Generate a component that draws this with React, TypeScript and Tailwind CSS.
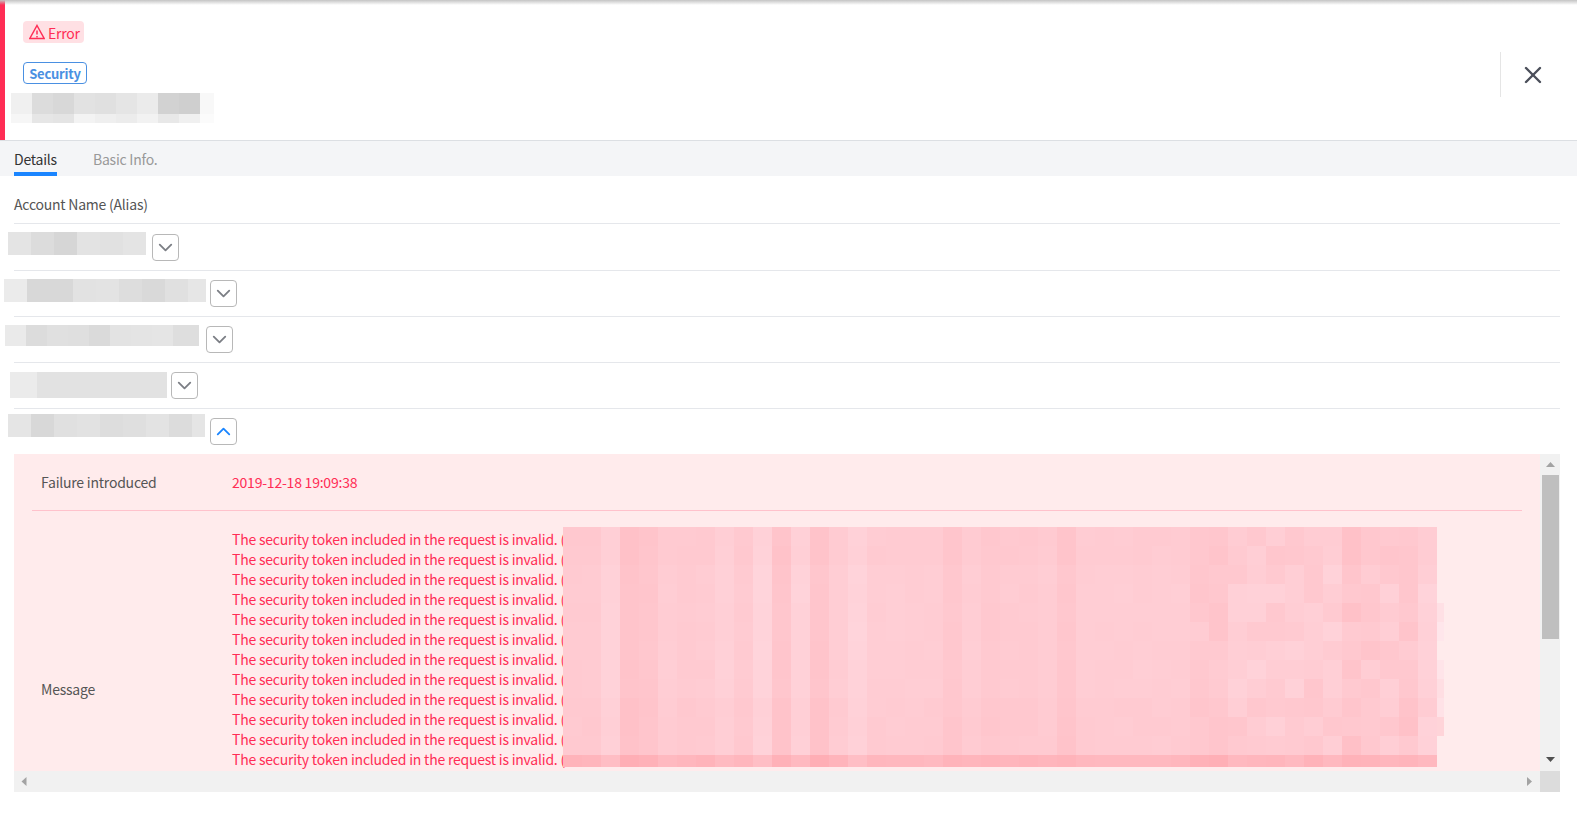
import React from "react";
import { X, ChevronDown, ChevronUp } from "lucide-react";

const gray = (v: number) => `rgb(${v},${v},${v})`;

// redacted account names
const rows = [
  { block: "-ml-[6px] mt-[8px]", cell: "w-[23px] h-[23px]", shades: [228, 220, 214, 227, 225, 228], btn: "ml-[6px] mt-[10px]" },
  { block: "-ml-[10px] mt-[8px]", cell: "w-[23px] h-[23px]", shades: [235, 216, 216, 226, 227, 221, 217, 224, 230], btn: "ml-[4px] mt-[9px]", last: "w-[18px] h-[23px]" },
  { block: "-ml-[9px] mt-[8px]", cell: "w-[21px] h-[21px]", shades: [234, 220, 224, 223, 218, 227, 228, 229, 222], btn: "ml-[7px] mt-[9px]", last: "w-[26px] h-[21px]" },
  { block: "-ml-[4px] mt-[9px]", cell: "w-[27px] h-[26px]", shades: [235, 226, 226, 226, 226, 226], btn: "ml-[4px] mt-[9px]", last: "w-[22px] h-[26px]" },
  { block: "-ml-[6px] mt-[5px]", cell: "w-[23px] h-[23px]", shades: [229, 216, 224, 226, 221, 223, 227, 220, 229], btn: "ml-[5px] mt-[9px]", last: "w-[13px] h-[23px]", open: true },
];

const titleTop = [240, 220, 216, 226, 224, 229, 235, 210, 207, 248];
const titleBottom = [246, 230, 228, 243, 239, 236, 242, 232, 240, 251];

const columns = [
  198, 198, 208, 188, 192, 201, 198, 199, 206, 198, 210, 190, 208, 190, 201, 210, 201, 201, 201, 201, 194, 201, 196,
  198, 198, 201, 192, 201, 201, 201, 201, 201, 201, 194, 192, 201, 201, 201, 201, 198, 201, 191, 195, 199, 194, 206,
];
const edge: Record<number, number> = { 4: 224, 5: 230, 7: 228, 8: 222, 9: 226, 10: 212 };

const noise = (r: number, c: number) => {
  const n = Math.sin(r * 12.9898 + c * 78.233) * 43758.5453;
  return n - Math.floor(n) - 0.5;
};

const shade = (r: number, c: number) => {
  const base = 202 + (columns[c] - 200) * 0.7;
  if (r === 12) return Math.round(base - 20 + noise(r, c) * 5);
  const spread = c >= 33 ? 10 : 2;
  const lift = r >= 2 && r <= 8 ? 2 : 0;
  return Math.round(base + lift + noise(r, c) * spread);
};

const Mosaic = () => (
  <div className="absolute left-[331px] top-[-2px] flex">
    <div className="grid grid-cols-[repeat(46,19px)] grid-rows-[repeat(12,19px)_12px]">
      {Array.from({ length: 13 * 46 }, (_, i) => {
        const g = shade(Math.floor(i / 46), i % 46);
        return <div key={i} style={{ backgroundColor: `rgb(255,${g},${g + 7})` }} />;
      })}
    </div>
    <div className="grid w-[7px] grid-rows-[repeat(12,19px)]">
      {Array.from({ length: 12 }, (_, r) => (
        <div key={r} style={{ backgroundColor: edge[r] ? `rgb(255,${edge[r]},${edge[r] + 5})` : "transparent" }} />
      ))}
    </div>
  </div>
);

const Arrow = ({ d, fill }: { d: string; fill: string }) => (
  <svg width="9" height="9" viewBox="0 0 9 9" fill={fill}>
    <path d={d} />
  </svg>
);

export default function App() {
  return (
    <div className="relative h-[816px] w-[1577px] overflow-hidden bg-white font-['Noto_Sans_CJK_KR','Noto_Sans',sans-serif] text-[14px] tracking-[-0.22px] text-[#333]">
      <div className="absolute inset-x-0 top-0 h-[5px] bg-gradient-to-b from-[#c4c4c4] to-transparent" />

      <header className="flex h-[141px] border-b border-[#dcdfe3]">
        <div className="w-[5px] bg-[#ff2d55]" />
        <div className="flex flex-1 flex-col items-start pl-[18px] pt-[21px]">
          <span className="flex h-[22px] w-[61px] items-center rounded-[4px] bg-[#ffe0e4] pl-[6px] text-[#ff2d55]">
            <svg width="16" height="16" viewBox="0 0 16 16" fill="none" stroke="currentColor" strokeWidth="1.5">
              <path d="M8 1.5 L15.2 14.5 H0.8 Z" strokeLinejoin="miter" />
              <path d="M8 6.5 V10.5 M8 12 V13.5" />
            </svg>
            <span className="ml-[3px] pt-[2px] leading-none">Error</span>
          </span>
          <span className="mt-[19px] flex h-[22px] w-[64px] items-center justify-center rounded-[4px] border border-[#4a90e2] pt-[1px] text-[13px] font-bold text-[#4a90e2]">
            Security
          </span>
          <div className="-ml-[12px] mt-[9px] flex flex-col">
            <div className="flex">
              {titleTop.map((v, i) => (
                <div key={i} className={i === 9 ? "h-[21px] w-[14px]" : "h-[21px] w-[21px]"} style={{ backgroundColor: gray(v) }} />
              ))}
            </div>
            <div className="flex">
              {titleBottom.map((v, i) => (
                <div key={i} className={i === 9 ? "h-[9px] w-[14px]" : "h-[9px] w-[21px]"} style={{ backgroundColor: gray(v) }} />
              ))}
            </div>
          </div>
        </div>
        <div className="mr-[17px] mt-[52px] flex h-[45px] w-[60px] items-center justify-center border-l border-[#e5e5e5] pl-[4px]">
          <X size={28} strokeWidth={2.1} className="text-[#4b4f5a]" />
        </div>
      </header>

      <nav className="flex h-[35px] gap-[36px] bg-[#f4f5f7] pl-[14px]">
        <span className="h-[35px] border-b-4 border-[#1a85ff] pt-[8px] leading-[20px] text-[#333]">Details</span>
        <span className="pt-[8px] leading-[20px] text-[#999]">Basic Info.</span>
      </nav>

      <main className="pl-[14px] pr-[17px]">
        <div className="flex h-[47px] items-center pt-[10px] text-[#555]">Account Name (Alias)</div>
        {rows.map((row, i) => (
          <div key={i} className={i === 0 ? "flex h-[47px] border-t border-[#e5e7eb]" : "flex h-[46px] border-t border-[#e5e7eb]"}>
            <div className={`flex items-start ${row.block}`}>
              {row.shades.map((v, j) => (
                <div
                  key={j}
                  className={row.last && j === row.shades.length - 1 ? row.last : row.cell}
                  style={{ backgroundColor: gray(v) }}
                />
              ))}
            </div>
            <button className={`flex h-[27px] w-[27px] items-center justify-center rounded-[4px] border border-[#b8b8b8] ${row.btn}`}>
              {row.open ? (
                <ChevronUp size={23} strokeWidth={1.9} className="text-[#1a85ff]" />
              ) : (
                <ChevronDown size={23} strokeWidth={1.9} className="text-[#7c7f85]" />
              )}
            </button>
          </div>
        ))}

        <section className="flex h-[338px] flex-col">
          <div className="flex h-[317px]">
            <div className="relative flex-1 overflow-hidden bg-[#ffebec]">
              <div className="mx-[18px] flex h-[57px] items-center border-b border-[#ffc2cc] pl-[9px] pt-[1px]">
                <span className="w-[191px] text-[#555]">Failure introduced</span>
                <span className="text-[#ff2d55]">2019-12-18 19:09:38</span>
              </div>
              <div className="mx-[18px] flex h-[356px] items-center pl-[9px]">
                <span className="w-[191px] text-[#555]">Message</span>
                <div className="relative mt-[18px] self-start leading-[20px] whitespace-nowrap text-[#ff2d55]">
                  {Array.from({ length: 12 }, (_, i) => (
                    <div key={i}>The security token included in the request is invalid. (</div>
                  ))}
                  <Mosaic />
                </div>
              </div>
            </div>
            <div className="flex w-[20px] flex-col items-center bg-[#f1f1f1] pt-[7px]">
              <Arrow d="M4.5 1 L9 6 H0 Z" fill="#a3a3a3" />
              <div className="mt-[5px] h-[164px] w-[17px] bg-[#bfbfbf]" />
              <div className="flex-1" />
              <div className="mb-[7px]">
                <Arrow d="M0 2 H9 L4.5 7 Z" fill="#505050" />
              </div>
            </div>
          </div>
          <div className="flex h-[21px]">
            <div className="flex flex-1 items-center justify-between bg-[#f1f1f1] pl-[6px] pr-[6px]">
              <Arrow d="M6.5 0 V9 L1.5 4.5 Z" fill="#a3a3a3" />
              <Arrow d="M2 0 V9 L7 4.5 Z" fill="#a3a3a3" />
            </div>
            <div className="w-[20px] bg-[#dcdcdc]" />
          </div>
        </section>
      </main>
    </div>
  );
}
